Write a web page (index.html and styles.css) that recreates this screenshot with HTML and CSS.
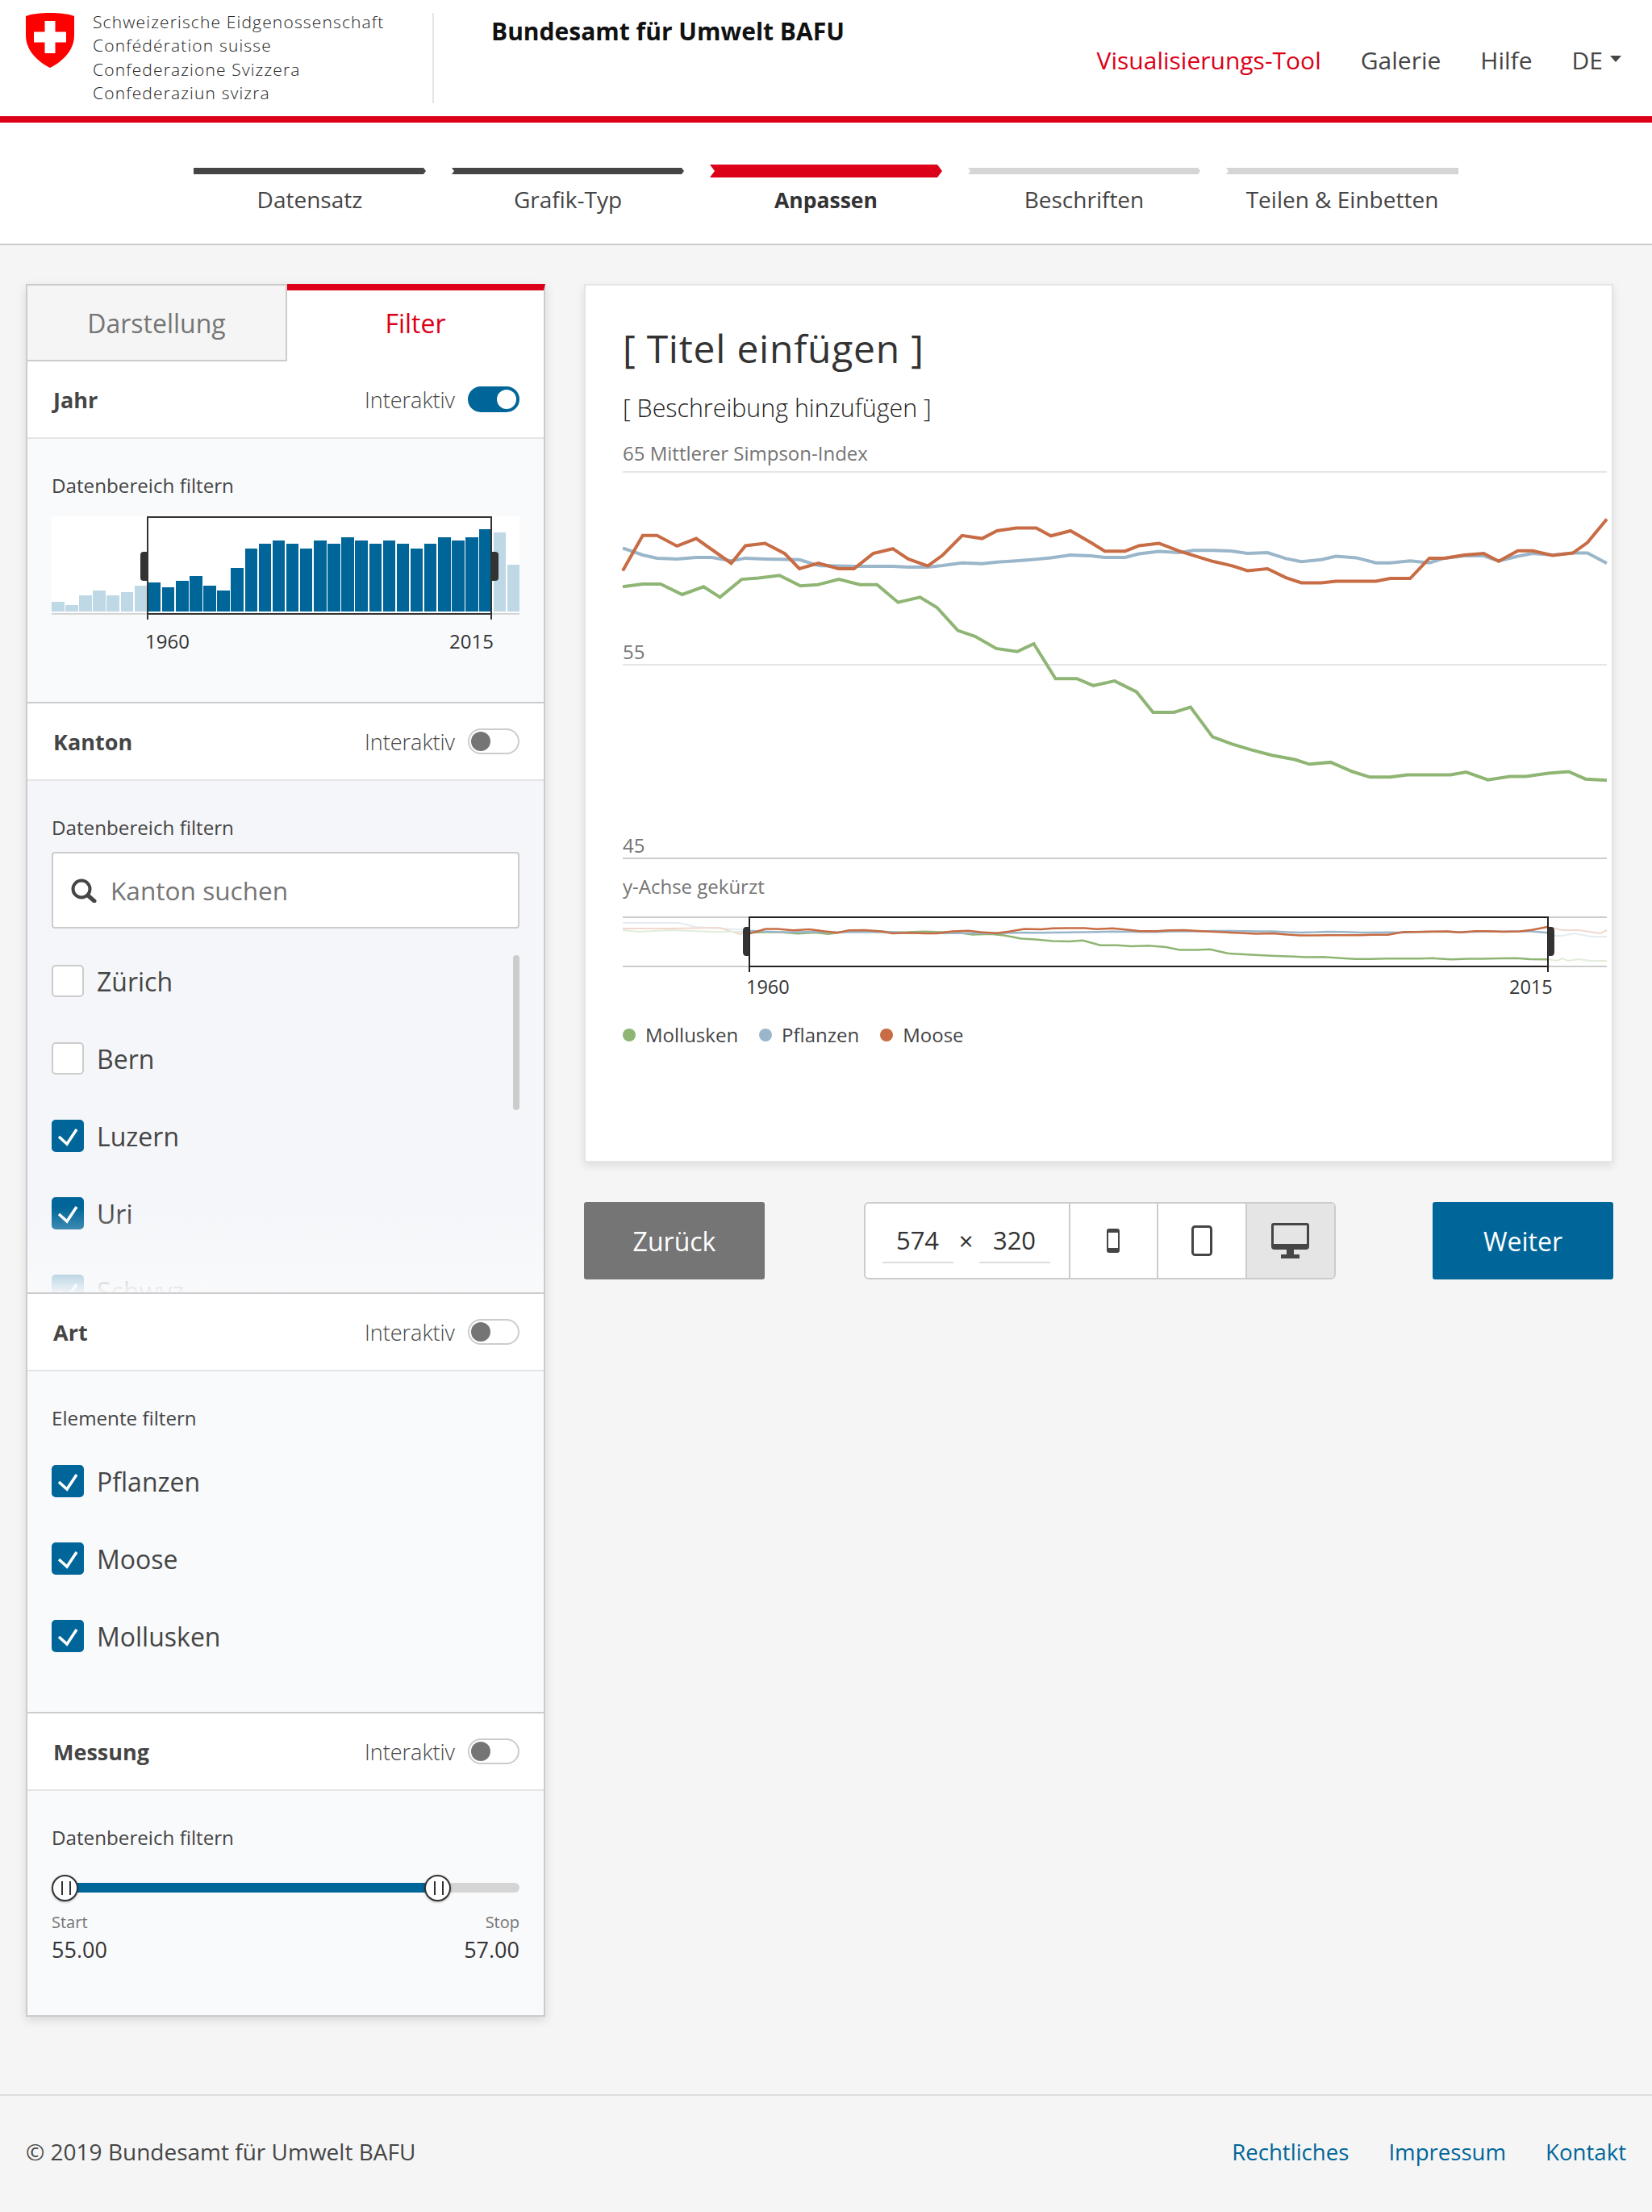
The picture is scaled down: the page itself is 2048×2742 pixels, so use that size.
FILE: index.html
```html
<!DOCTYPE html>
<html lang="de">
<head>
    <meta charset="UTF-8">
    <title>Visualisierungs-Tool</title>
    <link rel="stylesheet" href="styles.css">
</head>
<body>
    <svg class="sprites" width="0" height="0">
        <symbol id="tick" viewBox="0 0 40 40">
            <polyline points="9,21 19,30 31,12" fill="none" stroke="#fff" stroke-width="3.5"/>
        </symbol>
    </svg>

    <header class="site-header">
        <div class="brand">
            <svg class="shield" viewBox="0 0 60 68" width="60" height="68">
                <path d="M0 4C8 1 18 0 30 0C42 0 52 1 60 4V28C60 46 46 60 30 68C14 60 0 46 0 28Z" fill="#ff0000"/>
                <path d="M23.5 10H36.5V23.5H50V36.5H36.5V50H23.5V36.5H10V23.5H23.5Z" fill="#fff"/>
            </svg>
            <div class="brand-names">
                <div>Schweizerische Eidgenossenschaft</div>
                <div>Confédération suisse</div>
                <div>Confederazione Svizzera</div>
                <div>Confederaziun svizra</div>
            </div>
        </div>
        <h1 class="office">Bundesamt für Umwelt BAFU</h1>
        <nav class="main-nav">
            <a class="active">Visualisierungs-Tool</a>
            <a>Galerie</a>
            <a>Hilfe</a>
            <a class="lang">DE<span class="caret"></span></a>
        </nav>
    </header>

    <div class="steps">
        <div class="step done first"><div class="step-bar-wrap"><div class="step-bar"></div></div><span>Datensatz</span></div>
        <div class="step done"><div class="step-bar-wrap"><div class="step-bar"></div></div><span>Grafik-Typ</span></div>
        <div class="step current"><div class="step-bar-wrap"><div class="step-bar"></div></div><span>Anpassen</span></div>
        <div class="step"><div class="step-bar-wrap"><div class="step-bar"></div></div><span>Beschriften</span></div>
        <div class="step last"><div class="step-bar-wrap"><div class="step-bar"></div></div><span>Teilen &amp; Einbetten</span></div>
    </div>

    <main class="workspace">
        <aside class="sidebar">
            <div class="tabs">
                <div class="tab">Darstellung</div>
                <div class="tab active">Filter</div>
            </div>

            <section class="filter filter-year">
                <div class="filter-head">
                    <strong>Jahr</strong>
                    <div class="interactive">Interaktiv <span class="toggle on"></span></div>
                </div>
                <div class="filter-body">
                    <div class="filter-label">Datenbereich filtern</div>
                    <div class="histogram">
                        <div class="bars">
                            <i class="out" style="height:12px"></i><i class="out" style="height:8px"></i><i class="out" style="height:20px"></i><i class="out" style="height:26px"></i><i class="out" style="height:20px"></i><i class="out" style="height:24px"></i><i class="out" style="height:32px"></i>
                            <i style="height:36px"></i><i style="height:30px"></i><i style="height:38px"></i><i style="height:44px"></i><i style="height:32px"></i><i style="height:26px"></i><i style="height:54px"></i><i style="height:78px"></i><i style="height:84px"></i><i style="height:88px"></i><i style="height:84px"></i><i style="height:78px"></i><i style="height:88px"></i><i style="height:84px"></i><i style="height:92px"></i><i style="height:88px"></i><i style="height:84px"></i><i style="height:88px"></i><i style="height:84px"></i><i style="height:78px"></i><i style="height:84px"></i><i style="height:92px"></i><i style="height:88px"></i><i style="height:92px"></i><i style="height:102px"></i>
                            <i class="out" style="height:98px"></i><i class="out" style="height:58px"></i>
                        </div>
                        <div class="brush"><b class="grip left"></b><b class="grip right"></b></div>
                    </div>
                    <div class="year-axis"><span>1960</span><span>2015</span></div>
                </div>
            </section>

            <section class="filter filter-canton">
                <div class="filter-head">
                    <strong>Kanton</strong>
                    <div class="interactive">Interaktiv <span class="toggle"></span></div>
                </div>
                <div class="filter-body">
                    <div class="filter-label">Datenbereich filtern</div>
                    <div class="search">
                        <svg viewBox="0 0 32 30" width="32" height="30">
                            <circle cx="13" cy="13" r="10.5" fill="none" stroke="#454545" stroke-width="4"/>
                            <path d="M21 21L29 28" stroke="#454545" stroke-width="5" stroke-linecap="round"/>
                        </svg>
                        <span>Kanton suchen</span>
                    </div>
                    <div class="check-list">
                        <label class="check"><span class="box"></span>Zürich</label>
                        <label class="check"><span class="box"></span>Bern</label>
                        <label class="check"><span class="box checked"><svg class="tick"><use href="#tick"/></svg></span>Luzern</label>
                        <label class="check"><span class="box checked"><svg class="tick"><use href="#tick"/></svg></span>Uri</label>
                        <label class="check"><span class="box checked"><svg class="tick"><use href="#tick"/></svg></span>Schwyz</label>
                    </div>
                    <div class="scrollbar"></div>
                    <div class="fade"></div>
                </div>
            </section>

            <section class="filter filter-kind">
                <div class="filter-head">
                    <strong>Art</strong>
                    <div class="interactive">Interaktiv <span class="toggle"></span></div>
                </div>
                <div class="filter-body">
                    <div class="filter-label">Elemente filtern</div>
                    <div class="check-list">
                        <label class="check"><span class="box checked"><svg class="tick"><use href="#tick"/></svg></span>Pflanzen</label>
                        <label class="check"><span class="box checked"><svg class="tick"><use href="#tick"/></svg></span>Moose</label>
                        <label class="check"><span class="box checked"><svg class="tick"><use href="#tick"/></svg></span>Mollusken</label>
                    </div>
                </div>
            </section>

            <section class="filter filter-measure">
                <div class="filter-head">
                    <strong>Messung</strong>
                    <div class="interactive">Interaktiv <span class="toggle"></span></div>
                </div>
                <div class="filter-body">
                    <div class="filter-label">Datenbereich filtern</div>
                    <div class="slider">
                        <div class="slider-fill"></div>
                        <span class="knob knob-start"></span>
                        <span class="knob knob-stop"></span>
                    </div>
                    <div class="range-values">
                        <div><small>Start</small>55.00</div>
                        <div class="right"><small>Stop</small>57.00</div>
                    </div>
                </div>
            </section>
        </aside>

        <div class="content">
            <div class="chart-card">
                <h2>[ Titel einfügen ]</h2>
                <p class="chart-desc">[ Beschreibung hinzufügen ]</p>
                <div class="axis-title">65 Mittlerer Simpson-Index</div>
                <svg class="plot" viewBox="0 0 1220 482" width="1220" height="482">
                    <line class="grid" x1="0" x2="1220" y1="1" y2="1"/>
                    <line class="grid" x1="0" x2="1220" y1="240" y2="240"/>
                    <line class="grid base" x1="0" x2="1220" y1="480" y2="480"/>
                    <text x="0" y="233">55</text>
                    <text x="0" y="473">45</text>
                    <polyline id="line-mollusken" class="series green" points="0,143.3 24.8,139.9 46.9,139.9 73.8,153 100.2,143.3 120.6,156.4 147.5,134.1 168.3,132.6 194.3,129.2 220.3,142.3 242,140.8 268,134.1 294,140.8 315.3,140.8 341.3,162.7 368.6,156.4 389.5,169 415.5,197.6 436.7,204.8 463.2,219.9 489.2,223.7 509.6,214 536.5,257.2 562.9,257.2 583.3,265.9 609.8,260.1 637,273.7 657.4,299 683.5,299 703.9,292.6 731.2,329.4 756.3,338.6 778.9,345.4 804.9,352.2 833.1,357.5 851.3,363.3 877.7,360.9 904.6,372.5 926.3,379.3 951.5,379.3 972.7,376.4 1026.1,376.4 1045.6,373 1072.5,382.7 1099.8,378.4 1119.4,378.4 1147.6,374.5 1172.7,372.5 1193.5,381.7 1220,383.2"/>
                    <polyline id="line-pflanzen" class="series blue" points="0,95.3 24.8,104 42.5,107.9 67.3,108.9 91.1,107 110.6,107 134.5,111.3 152.2,107.9 176.5,108.9 219,109.8 242.9,117.1 286.7,118.1 334.8,118.1 353.9,119 378.2,119 396.8,117.1 420.7,113.7 445.4,114.7 464,112.8 487.9,111.3 512.6,109.3 530.8,107.4 555.1,104 580.3,105 597.6,106.9 622.8,106.9 640.1,102.5 664.8,99.6 690,101.1 707.3,98.2 731.2,98.2 756.3,99.2 774.5,102.1 799.3,101.1 822.2,108.4 841.3,112.2 866,109.8 884.2,105.5 909.4,107.4 933.7,113.7 951.5,113.7 976.2,111.3 1000,113.7 1018.7,107.9 1043.4,105 1067.3,105 1085.9,111.3 1109.7,105.5 1128,102.1 1152.7,104 1177.8,101.6 1196,101.6 1220,114.2"/>
                    <polyline id="line-moose" class="series orange" points="0,123.4 24.8,79.8 42.5,79.8 67.3,92.9 91.1,83.6 134.5,114.2 152.2,92.4 176.5,89.5 200.8,102.1 219,121 242.9,114.2 267.6,121 286.7,121 310.5,102.1 334.8,96.2 353.9,108.9 378.2,117.6 396.8,104 420.7,79.8 445.4,83.6 464,74 487.9,70.6 512.6,70.6 530.8,80.3 555.1,74 580.3,88.5 597.6,99.2 622.8,99.2 640.1,92.4 664.8,89.5 690,99.2 731.2,111.8 756.3,117.6 774.5,123.4 799.3,121 822.2,132.1 841.3,138.4 866,138.4 884.2,136.5 933.7,136.5 951.5,133.1 976.2,133.1 1000,107.9 1018.7,107.9 1043.4,104 1067.3,102.1 1085.9,111.8 1109.7,98.7 1128,98.7 1152.7,104.5 1177.8,101.6 1196,88.5 1220,59.4"/>
                </svg>
                <div class="axis-note">y-Achse gekürzt</div>
                <svg class="mini" viewBox="0 0 1220 100" width="1220" height="100">
                    <line class="grid base" x1="0" x2="1220" y1="1" y2="1"/>
                    <line class="grid base" x1="0" x2="1220" y1="62" y2="62"/>
                    <g class="mini-faded">
                        <polyline class="thin blue" points="0,8 70,8 90,13 157,17"/>
                        <polyline class="thin orange" points="0,15 60,15 120,14 145,22 157,18"/>
                        <polyline class="thin green" points="0,17 20,19 60,17 110,19 157,19"/>
                        <polyline class="thin orange" points="1147,13 1165,17 1185,17 1212,21 1220,17"/>
                        <polyline class="thin blue" points="1147,24 1165,24 1180,21 1200,25 1220,25"/>
                        <polyline class="thin green" points="1147,53 1158,55 1165,52 1172,55 1185,53 1200,55 1220,55"/>
                    </g>
                    <use href="#line-mollusken" transform="translate(157,0) scale(.811,.139)"/>
                    <use href="#line-pflanzen" transform="translate(157,5) scale(.811,.133)"/>
                    <use href="#line-moose" transform="translate(157,5) scale(.811,.133)"/>
                    <rect class="mini-brush" x="157" y="1" width="990" height="61"/>
                    <path class="mini-tick" d="M157 62V69M1147 62V69"/>
                    <path class="mini-grip" d="M157 13H153Q149 13 149 18V44Q149 49 153 49H157ZM1147 13H1151Q1155 13 1155 18V44Q1155 49 1151 49H1147Z"/>
                    <text class="mini-label" x="153" y="96">1960</text>
                    <text class="mini-label" x="1099" y="96">2015</text>
                </svg>
                <div class="legend">
                    <span class="legend-item"><i class="dot green"></i>Mollusken</span>
                    <span class="legend-item"><i class="dot blue"></i>Pflanzen</span>
                    <span class="legend-item"><i class="dot orange"></i>Moose</span>
                </div>
            </div>

            <div class="chart-actions">
                <button class="btn btn-back">Zurück</button>
                <div class="size-group">
                    <div class="size-inputs"><span class="size-input">574</span><span class="times">×</span><span class="size-input">320</span></div>
                    <div class="size-option">
                        <svg viewBox="0 0 16 30" width="16" height="30">
                            <rect x="1" y="1" width="14" height="28" rx="2" fill="#fff" stroke="#454545" stroke-width="2"/>
                            <path d="M1 3Q1 1 3 1H13Q15 1 15 3V5H1ZM1 24H15V27Q15 29 13 29H3Q1 29 1 27Z" fill="#454545"/>
                        </svg>
                    </div>
                    <div class="size-option">
                        <svg viewBox="0 0 26 38" width="26" height="38">
                            <rect x="1.5" y="1.5" width="23" height="35" rx="3" fill="#fff" stroke="#454545" stroke-width="3"/>
                        </svg>
                    </div>
                    <div class="size-option selected">
                        <svg viewBox="0 0 47 44" width="47" height="44">
                            <path d="M3 0H44Q47 0 47 3V29Q47 33 43 33H4Q0 33 0 29V3Q0 0 3 0Z" fill="#454545"/>
                            <rect x="3" y="3" width="41" height="23" fill="#e5e5e5"/>
                            <path d="M19 33H28V39H35V44H12V39H19Z" fill="#454545"/>
                        </svg>
                    </div>
                </div>
                <button class="btn btn-next">Weiter</button>
            </div>
        </div>
    </main>

    <footer class="site-footer">
        <span>© 2019 Bundesamt für Umwelt BAFU</span>
        <div class="footer-links">
            <a>Rechtliches</a>
            <a>Impressum</a>
            <a>Kontakt</a>
        </div>
    </footer>
</body>
</html>
```

FILE: styles.css
```css
* {
    box-sizing: border-box;
}
body {
    margin: 0;
    min-height: 100vh;
    display: flex;
    flex-direction: column;
    font-family: 'Open Sans', 'Liberation Sans', sans-serif;
    color: #454545;
    background-color: #f5f5f5;
}
.sprites {
    display: block;
    position: absolute;
}

/* header */
.site-header {
    display: flex;
    height: 152px;
    padding: 16px 32px 0;
    background: #fff;
    border-bottom: 8px solid #dc0018;
}
.brand {
    display: flex;
    width: 506px;
    height: 112px;
    border-right: 2px solid #e5e5e5;
}
.shield {
    flex: none;
}
.brand-names {
    margin: -3px 0 0 23px;
    font-size: 21px;
    line-height: 29.4px;
    letter-spacing: 1.15px;
    font-weight: 300;
    color: #222;
}
.office {
    margin: 3px 0 0 71px;
    font-size: 30px;
    line-height: 40px;
    font-weight: 700;
    color: #111;
}
.main-nav {
    display: flex;
    align-items: flex-start;
    gap: 49px;
    margin: 37px 0 0 auto;
    font-size: 30px;
    line-height: 44px;
}
.main-nav .active {
    color: #dc0018;
}
.lang {
    display: flex;
    align-items: center;
    margin-right: 6px;
}
.caret {
    width: 0;
    height: 0;
    margin: 0 0 4px 9px;
    border-left: 7px solid transparent;
    border-right: 7px solid transparent;
    border-top: 8px solid #454545;
}

/* steps */
.steps {
    display: flex;
    justify-content: center;
    gap: 32px;
    height: 152px;
    padding-top: 52px;
    background: #fff;
    border-bottom: 2px solid #ccc;
}
.step {
    width: 288px;
    text-align: center;
    font-size: 28px;
    line-height: 40px;
}
.step-bar-wrap {
    display: flex;
    align-items: center;
    height: 16px;
    margin-bottom: 7px;
}
.step-bar {
    width: 100%;
    height: 8px;
    background: #d5d5d5;
    clip-path: polygon(0 0, calc(100% - 3px) 0, 100% 50%, calc(100% - 3px) 100%, 0 100%, 3px 50%);
}
.step.done .step-bar {
    background: #454545;
}
.step.first .step-bar {
    clip-path: polygon(0 0, calc(100% - 3px) 0, 100% 50%, calc(100% - 3px) 100%, 0 100%);
}
.step.last .step-bar {
    clip-path: polygon(0 0, 100% 0, 100% 100%, 0 100%, 3px 50%);
}
.step.current .step-bar {
    height: 16px;
    background: #dc0018;
    clip-path: polygon(0 0, calc(100% - 6px) 0, 100% 50%, calc(100% - 6px) 100%, 0 100%, 6px 50%);
}
.step.current span {
    font-size: 26.5px;
    font-weight: 700;
    color: #333;
}

/* layout */
.workspace {
    flex: 1;
    display: flex;
    align-items: flex-start;
    padding: 48px 48px 96px 32px;
}

/* sidebar */
.sidebar {
    flex: none;
    width: 644px;
    background: #fff;
    border: solid #ccc;
    border-width: 0 2px 2px;
    box-shadow: 0 4px 12px rgba(0, 0, 0, 0.12);
}
.tabs {
    display: flex;
    height: 96px;
    margin: 0 -2px;
}
.tab {
    display: flex;
    align-items: center;
    justify-content: center;
    width: 324px;
    font-size: 32px;
    color: #757575;
    background: #f5f5f5;
    border: 2px solid #ccc;
}
.tab.active {
    flex: 1;
    color: #dc0018;
    background: #fff;
    border: 0;
    border-top: 8px solid #dc0018;
    border-right: 2px solid #ccc;
    padding-bottom: 8px;
}
.filter {
    border-bottom: 2px solid #ccc;
}
.filter-measure {
    border-bottom: 0;
}
.filter-head {
    display: flex;
    align-items: center;
    justify-content: space-between;
    height: 96px;
    padding: 0 30px 0 32px;
    background: #fff;
    border-bottom: 2px solid #e5e5e5;
    font-size: 27px;
}
.interactive {
    display: flex;
    align-items: center;
    gap: 16px;
    font-weight: 300;
}
.toggle {
    position: relative;
    width: 64px;
    height: 32px;
    border: 2px solid #ccc;
    border-radius: 16px;
    background: #fff;
}
.toggle::after {
    content: "";
    position: absolute;
    left: 2px;
    top: 2px;
    width: 24px;
    height: 24px;
    border-radius: 50%;
    background: #757575;
}
.toggle.on {
    background: #006699;
    border-color: #006699;
}
.toggle.on::after {
    left: auto;
    right: 2px;
    background: #fff;
}
.filter-body {
    position: relative;
    padding: 41px 30px 0;
    background: #f9fafc;
    overflow: hidden;
}
.filter-label {
    font-size: 24.2px;
    line-height: 34px;
}
.filter-year .filter-body {
    height: 326px;
}
.filter-canton .filter-body {
    height: 634px;
    background: #f5f6f9;
}
.filter-kind .filter-body {
    height: 422px;
}
.filter-measure .filter-body {
    height: 278px;
}

/* year histogram */
.histogram {
    position: relative;
    height: 122px;
    margin-top: 21px;
    background: linear-gradient(#fff 118px, #f9fafc 118px, #f9fafc 120px, #d5d5d5 120px);
}
.bars {
    display: flex;
    align-items: flex-end;
    gap: 1.6px;
    height: 118px;
}
.bars i {
    flex: 1;
    background: #006699;
}
.bars i.out {
    background: #bfd8e5;
}
.brush {
    position: absolute;
    left: 118px;
    top: 0;
    width: 428px;
    height: 122px;
    border: 2px solid #333;
}
.brush::before,
.brush::after {
    content: "";
    position: absolute;
    top: 120px;
    width: 2px;
    height: 6px;
    background: #333;
}
.brush::before {
    left: -2px;
}
.brush::after {
    right: -2px;
}
.grip {
    position: absolute;
    top: 42px;
    width: 8px;
    height: 36px;
    background: #333;
}
.grip.left {
    left: -10px;
    border-radius: 4px 0 0 4px;
}
.grip.right {
    right: -10px;
    border-radius: 0 4px 4px 0;
}
.year-axis {
    display: flex;
    justify-content: space-between;
    margin-top: 19px;
    padding: 0 32px 0 116px;
    font-size: 24px;
    line-height: 28px;
    color: #333;
}

/* search + checkboxes */
.search {
    display: flex;
    align-items: center;
    gap: 17px;
    height: 95px;
    margin-top: 13px;
    padding-left: 22px;
    background: #fff;
    border: 2px solid #ccc;
    border-radius: 4px;
    font-size: 31.6px;
    color: #757575;
}
.check-list {
    display: flex;
    flex-direction: column;
    gap: 56px;
    margin-top: 41px;
}
.filter-canton .check-list {
    margin-top: 45px;
}
.check {
    display: flex;
    align-items: center;
    gap: 16px;
    height: 40px;
    font-size: 32px;
}
.box {
    position: relative;
    flex: none;
    width: 40px;
    height: 40px;
    background: #fff;
    border: 2px solid #ccc;
    border-radius: 5px;
}
.box.checked {
    background: #006699;
    border-color: #006699;
}
.tick {
    position: absolute;
    left: -2px;
    top: -2px;
    width: 40px;
    height: 40px;
}
.scrollbar {
    position: absolute;
    right: 30px;
    top: 216px;
    width: 8px;
    height: 192px;
    background: #ccc;
    border-radius: 4px;
}
.fade {
    position: absolute;
    left: 0;
    right: 0;
    bottom: 0;
    height: 105px;
    background: linear-gradient(rgba(249, 250, 252, 0), rgba(249, 250, 252, 0.96));
}

/* measure slider */
.slider {
    position: relative;
    height: 12px;
    margin-top: 39px;
    background: #d5d5d5;
    border-radius: 6px;
}
.slider-fill {
    position: absolute;
    left: 16px;
    top: 0;
    width: 462px;
    height: 12px;
    background: #006699;
}
.knob {
    position: absolute;
    top: -10.5px;
    width: 33px;
    height: 33px;
    margin-left: -16.5px;
    background: #fff;
    border: 2px solid #333;
    border-radius: 50%;
    box-shadow: 0 1px 3px rgba(0, 0, 0, 0.3);
}
.knob::after {
    content: "";
    position: absolute;
    left: 10.5px;
    top: 6px;
    width: 8px;
    height: 17px;
    border: solid #333;
    border-width: 0 2px;
}
.knob-start {
    left: 16px;
}
.knob-stop {
    left: 478px;
}
.range-values {
    display: flex;
    justify-content: space-between;
    margin-top: 23px;
    font-size: 27px;
    line-height: 36px;
    color: #333;
}
.range-values small {
    display: block;
    margin-bottom: 2px;
    font-size: 20px;
    line-height: 28px;
    color: #757575;
}
.range-values .right {
    text-align: right;
}

/* chart card */
.content {
    flex: 1;
    margin-left: 48px;
}
.chart-card {
    height: 1089px;
    padding: 46px 6px 0 46px;
    background: #fff;
    border: 2px solid #e5e5e5;
    box-shadow: 0 4px 10px rgba(0, 0, 0, 0.1);
}
.chart-card h2 {
    margin: 0;
    font-size: 48px;
    line-height: 64px;
    letter-spacing: 0.75px;
    font-weight: 400;
    color: #333;
}
.chart-desc {
    margin: 20px 0 0;
    font-size: 30.4px;
    line-height: 44px;
    font-weight: 300;
    color: #222;
}
.axis-title,
.axis-note {
    font-size: 24px;
    line-height: 32px;
    color: #757575;
}
.axis-title {
    margin-top: 18px;
    margin-bottom: 6px;
}
.axis-note {
    margin-top: 17px;
}
.plot,
.mini {
    display: block;
    overflow: visible;
}
.plot text {
    font-size: 24px;
    fill: #757575;
}
.grid {
    stroke: #e5e5e5;
    stroke-width: 2;
}
.grid.base {
    stroke: #ccc;
}
.series {
    fill: none;
    stroke-width: var(--line-width, 4);
    vector-effect: non-scaling-stroke;
}
.mini use {
    --line-width: 2.5;
}
.series.green, .thin.green {
    stroke: #8fb574;
}
.series.blue, .thin.blue {
    stroke: #9ab6ca;
}
.series.orange, .thin.orange {
    stroke: #c76c44;
}
.mini-faded {
    opacity: 0.25;
}
.thin {
    fill: none;
    stroke-width: 2;
}
.mini {
    margin-top: 21px;
}
.mini-brush {
    fill: none;
    stroke: #222;
    stroke-width: 2;
}
.mini-tick {
    stroke: #222;
    stroke-width: 2;
}
.mini-grip {
    fill: #333;
}
.mini-label {
    font-size: 23.5px;
    fill: #333;
}
.legend {
    display: flex;
    gap: 26px;
    margin-top: 31px;
    font-size: 24px;
    line-height: 32px;
}
.legend-item {
    display: flex;
    align-items: center;
    gap: 12px;
}
.dot {
    width: 16px;
    height: 16px;
    border-radius: 50%;
}
.dot.green {
    background: #8fb574;
}
.dot.blue {
    background: #9ab6ca;
}
.dot.orange {
    background: #c76c44;
}

/* actions below chart */
.chart-actions {
    display: flex;
    justify-content: space-between;
    height: 96px;
    margin-top: 49px;
}
.btn {
    width: 224px;
    border: none;
    border-radius: 3px;
    color: #fff;
    font-family: inherit;
    font-size: 32px;
}
.btn-back {
    background: #757575;
}
.btn-next {
    background: #006699;
}
.size-group {
    display: flex;
    width: 585px;
    margin-left: 2px;
    background: #fff;
    border: 2px solid #ccc;
    border-radius: 6px;
    overflow: hidden;
}
.size-inputs {
    display: flex;
    align-items: center;
    flex: none;
    width: 252px;
    padding-left: 21px;
    font-size: 31px;
    color: #333;
}
.size-input {
    width: 88px;
    padding: 4px 0 6px;
    text-align: center;
    border-bottom: 2px solid #ddd;
    margin-top: 2px;
}
.times {
    width: 32px;
    text-align: center;
}
.size-option {
    flex: 1;
    display: flex;
    align-items: center;
    justify-content: center;
    border-left: 2px solid #ccc;
}
.size-option.selected {
    background: #e5e5e5;
}

/* footer */
.site-footer {
    display: flex;
    align-items: center;
    justify-content: space-between;
    height: 146px;
    padding: 0 32px 7px;
    border-top: 2px solid #ddd;
    font-size: 28px;
}
.footer-links {
    display: flex;
    gap: 49px;
    font-size: 27.6px;
    color: #006699;
}
```
